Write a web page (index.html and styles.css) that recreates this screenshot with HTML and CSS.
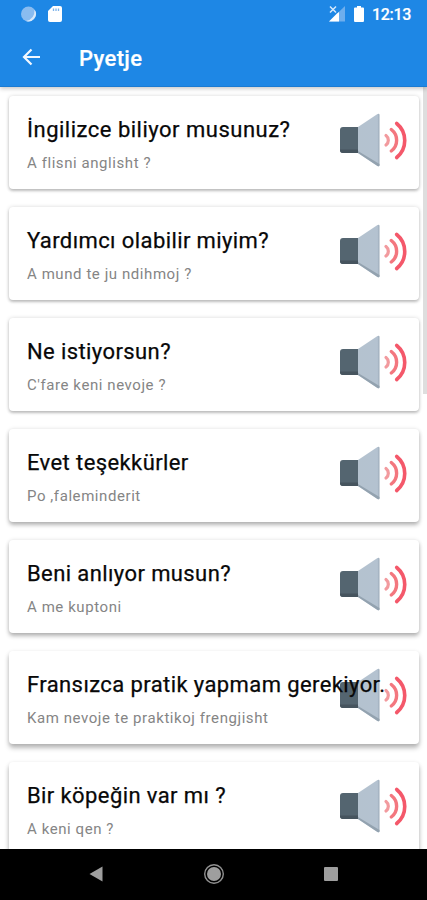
FILE: index.html
```html
<!DOCTYPE html>
<html lang="tr">
<head>
<meta charset="utf-8">
<title>Pyetje</title>
<link rel="stylesheet" href="styles.css">
</head>
<body>
<svg class="defs" width="0" height="0" aria-hidden="true">
  <defs>
    <linearGradient id="cone" x1="0" x2="1" y1="0" y2="0"><stop offset="0" stop-color="#b4c2cf"/><stop offset=".9" stop-color="#b4c2d0"/><stop offset="1" stop-color="#9aa9b8"/></linearGradient>
    <symbol id="speaker" viewBox="0 0 68 54">
      <path d="M3 14H20V40H3Q0 40 0 37V17Q0 14 3 14Z" fill="#546570"/>
      <path d="M0 36.500H20V40H3Q0 40 0 37Z" fill="#46545e"/>
      <path d="M18 14L37.500 1Q39.500 0 39.500 2V52Q39.500 54 37.500 53L18 40Z" fill="url(#cone)"/>
      <path d="M18 38L39.500 51V52Q39.500 54 37.500 53L18 40Z" fill="#93a2af"/>
      <g fill="none" stroke-linecap="round">
        <path d="M46 22.500A6 6 0 0 1 46 32" stroke="#f29a9e" stroke-width="3.200"/>
        <path d="M51.300 16.500A13.500 13.500 0 0 1 51.300 38" stroke="#f3777f" stroke-width="3.400"/>
        <path d="M56.700 10.500A22 22 0 0 1 56.700 44.500" stroke="#f4586a" stroke-width="3.600"/>
      </g>
    </symbol>
  </defs>
</svg>
<div class="screen">
  <header class="top">
    <div class="status">
      <svg width="44" height="18" viewBox="0 0 44 18">
        <circle cx="8.500" cy="9" r="7.500" fill="#8abcf0"/>
        <path d="M14.500 4.500A7.500 7.500 0 0 1 6 16Q15 14 14.500 4.500Z" fill="#d9eafb"/>
        <path d="M33 1H40Q42 1 42 3V15Q42 17 40 17H30Q28 17 28 15V6Z" fill="#fff"/>
        <path d="M33.500 3.500V6M36 3.500V6M38.500 3.500V6" stroke="#7db3ea" stroke-width="1.300"/>
      </svg>
      <div class="status-right">
        <svg width="36" height="18" viewBox="0 0 36 18">
          <path d="M16 1V16.500H0Z" fill="#6eaeed"/>
          <path d="M0 0H8V8H0Z" fill="#1e87e5"/>
          <path d="M1 1.500L7 7.500M7 1.500L1 7.500" stroke="#d5e8fb" stroke-width="1.500"/>
          <path d="M10 7V16.500H0L8 8.500Z" fill="#fff"/>
          <path d="M28 1H32V2.500H34Q35 2.500 35 3.500V15.500Q35 17 34 17H26Q25 17 25 15.500V3.500Q25 2.500 26 2.500H28Z" fill="#fff"/>
        </svg>
        <span class="clock">12:13</span>
      </div>
    </div>
    <div class="toolbar">
      <svg class="back" width="19" height="18" viewBox="0 0 19 18"><path d="M9.500 1.500L2 9L9.500 16.500M2 9H18" fill="none" stroke="#f2f8ff" stroke-width="2.200"/></svg>
      <h1>Pyetje</h1>
    </div>
  </header>
  <main class="list">
    <article class="card"><div><h2 class="loose">İngilizce biliyor musunuz?</h2><p>A flisni anglisht ?</p></div><svg class="speaker"><use href="#speaker"/></svg></article>
    <article class="card"><div><h2>Yardımcı olabilir miyim?</h2><p>A mund te ju ndihmoj ?</p></div><svg class="speaker"><use href="#speaker"/></svg></article>
    <article class="card"><div><h2>Ne istiyorsun?</h2><p>C'fare keni nevoje ?</p></div><svg class="speaker"><use href="#speaker"/></svg></article>
    <article class="card deep"><div><h2>Evet teşekkürler</h2><p>Po ,faleminderit</p></div><svg class="speaker"><use href="#speaker"/></svg></article>
    <article class="card deep"><div><h2>Beni anlıyor musun?</h2><p>A me kuptoni</p></div><svg class="speaker"><use href="#speaker"/></svg></article>
    <article class="card deeper"><div><h2>Fransızca pratik yapmam gerekiyor.</h2><p>Kam nevoje te praktikoj frengjisht</p></div><svg class="speaker"><use href="#speaker"/></svg></article>
    <article class="card deeper"><div><h2>Bir köpeğin var mı ?</h2><p>A keni qen ?</p></div><svg class="speaker"><use href="#speaker"/></svg></article>
    <div class="scrollbar"></div>
  </main>
  <nav class="navbar">
    <svg width="14" height="16" viewBox="0 0 14 16"><path d="M13.500 .5V15.500L.5 8Z" fill="#9e9e9e"/></svg>
    <svg width="22" height="22" viewBox="0 0 22 22"><circle cx="11" cy="11" r="9.300" fill="none" stroke="#929292" stroke-width="1.400"/><circle cx="11" cy="11" r="7" fill="#9e9e9e"/></svg>
    <svg width="14" height="14" viewBox="0 0 14 14"><rect width="14" height="14" rx="1" fill="#9e9e9e"/></svg>
  </nav>
</div>
</body>
</html>
```
FILE: styles.css
```css
* { box-sizing: border-box; margin: 0; padding: 0; }
body { width: 427px; height: 900px; overflow: hidden; font-family: Roboto, sans-serif; background: #fff; }
svg { display: block; flex: none; }
.defs { position: absolute; }
.screen { display: flex; flex-direction: column; height: 900px; }
.top { position: relative; z-index: 2; height: 87px; flex: none; background: #1e87e5; color: #fff; border-bottom: 1px solid #1b7bd2; box-shadow: 0 2px 4px rgba(0, 0, 0, .2); }
.status { display: flex; justify-content: space-between; height: 28px; padding: 5px 16px 0 20px; }
.status-right { display: flex; gap: 7px; }
.clock { font-size: 16px; line-height: 19px; font-weight: 500; letter-spacing: -.3px; -webkit-text-stroke: .2px #fff; }
.toolbar { display: flex; align-items: center; height: 60px; padding-left: 22px; gap: 38px; }
.back { margin-bottom: 2px; }
.toolbar h1 { padding-top: 2px; font-size: 22px; line-height: 28px; font-weight: 500; letter-spacing: .35px; -webkit-text-stroke: .2px #fff; }
.list { position: relative; flex: 1; min-height: 0; overflow: hidden; display: flex; flex-direction: column; gap: 18px; padding: 9px 8px 0 9px; }
.card { height: 93px; flex: none; display: flex; justify-content: space-between; padding: 17px 11px 0 18px; background: #fff; border-radius: 4px; box-shadow: 0 2px 3px rgba(0, 0, 0, .22), 0 0 4px rgba(0, 0, 0, .14); }
.card.deep { box-shadow: 0 3px 4px rgba(0, 0, 0, .28), 0 0 4px rgba(0, 0, 0, .1); }
.card.deeper { box-shadow: 0 4px 5px rgba(0, 0, 0, .26), 0 1px 4px rgba(0, 0, 0, .1); }
.card > div { position: relative; z-index: 1; width: 313px; white-space: nowrap; }
.card h2 { padding-top: 1px; font-size: 22px; line-height: 32px; font-weight: 400; letter-spacing: .4px; color: #080808; -webkit-text-stroke: .25px #080808; }
.card h2.loose { letter-spacing: .5px; }
.card p { margin-top: 7px; font-size: 15px; line-height: 20px; letter-spacing: .57px; color: #858585; }
.speaker { width: 68px; height: 54px; }
.scrollbar { position: absolute; top: 0; right: 0; width: 4px; height: 307px; background: #dedede; }
.navbar { height: 51px; flex: none; display: flex; align-items: center; justify-content: space-between; padding: 0 89px 2px; background: #000; }
```
